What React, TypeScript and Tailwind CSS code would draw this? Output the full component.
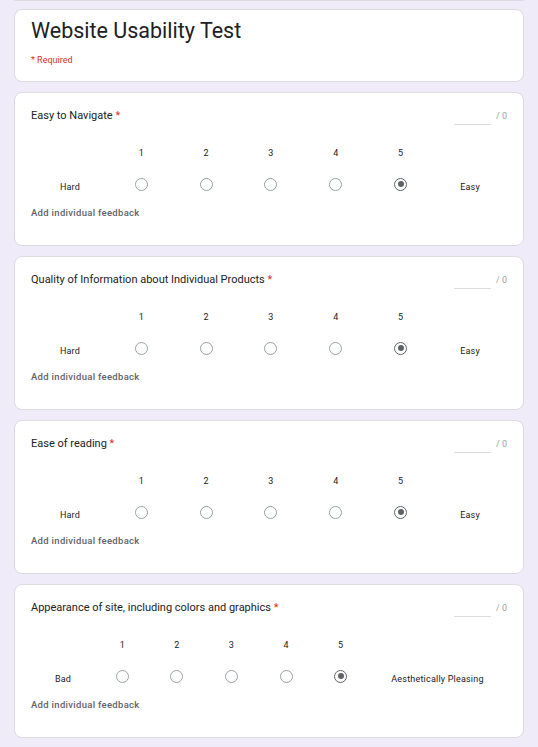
import React from 'react';

interface Question {
  title: string;
  low: string;
  high: string;
  cols: string;
}

const questions: Question[] = [
  { title: 'Easy to Navigate', low: 'Hard', high: 'Easy', cols: 'grid-cols-[78px_repeat(5,1fr)_74px]' },
  { title: 'Quality of Information about Individual Products', low: 'Hard', high: 'Easy', cols: 'grid-cols-[78px_repeat(5,1fr)_74px]' },
  { title: 'Ease of reading', low: 'Hard', high: 'Easy', cols: 'grid-cols-[78px_repeat(5,1fr)_74px]' },
  { title: 'Appearance of site, including colors and graphics', low: 'Bad', high: 'Aesthetically Pleasing', cols: 'grid-cols-[64px_repeat(5,1fr)_139px]' },
];

function Radio({ checked }: { checked?: boolean }) {
  return (
    <div
      className={`w-[13px] h-[13px] rounded-full border-[1.5px] flex items-center justify-center ${
        checked ? 'border-[#5f6368]' : 'border-[#9aa0a6]'
      }`}
    >
      {checked && <div className="w-[6px] h-[6px] rounded-full bg-[#5f6368]" />}
    </div>
  );
}

function ScaleCard({ q }: { q: Question }) {
  return (
    <div className="bg-white rounded-lg border border-[#dadce0] h-[154px] pl-[16px] pr-[16px] pt-[15px]">
      <div className="flex justify-between items-start">
        <div className="text-[11px] leading-4 text-[#202124]">
          {q.title} <span className="text-[#d93025]">*</span>
        </div>
        <div className="flex items-start gap-[5px] text-[9px] leading-4 text-[#9aa0a6]">
          <div className="w-[37px] h-[17px] border-b border-[#dadce0]" />
          <span>/ 0</span>
        </div>
      </div>
      <div className={`grid ${q.cols} grid-rows-[16px_16px] gap-y-[15px] mt-[20px] text-[9px] tracking-[0.2px] text-[#202124]`}>
        <div />
        {[1, 2, 3, 4, 5].map((n) => (
          <div key={n} className="flex items-center justify-center leading-4">
            {n}
          </div>
        ))}
        <div />
        <div className="self-end text-center leading-[10px]">{q.low}</div>
        {[1, 2, 3, 4, 5].map((n) => (
          <div key={n} className="flex items-center justify-center">
            <Radio checked={n === 5} />
          </div>
        ))}
        <div className="self-end text-center leading-[10px]">{q.high}</div>
      </div>
      <div className="mt-[15px] text-[9.5px] tracking-[0.3px] leading-3 font-medium text-[#5f6368]">
        Add individual feedback
      </div>
    </div>
  );
}

export default function App() {
  return (
    <div className="h-screen bg-[#f0ebf8] px-[14px] flex flex-col gap-[10px] overflow-hidden font-['Roboto',sans-serif]">
      <div className="shrink-0 bg-white rounded-b-lg border-b border-[#dadce0] h-[1px] -mb-[2px]" />
      <div className="shrink-0 bg-white rounded-lg border border-[#dadce0] h-[73px] pl-[16px] pt-[6px]">
        <h1 className="text-[21.5px] leading-[30px] text-[#202124]">Website Usability Test</h1>
        <div className="mt-[8px] text-[9px] leading-3 text-[#d93025]">* Required</div>
      </div>
      {questions.map((q) => (
        <div key={q.title} className="shrink-0">
          <ScaleCard q={q} />
        </div>
      ))}
      <div className="shrink-0 bg-white rounded-t-lg border border-[#dadce0] h-[60px]" />
    </div>
  );
}
